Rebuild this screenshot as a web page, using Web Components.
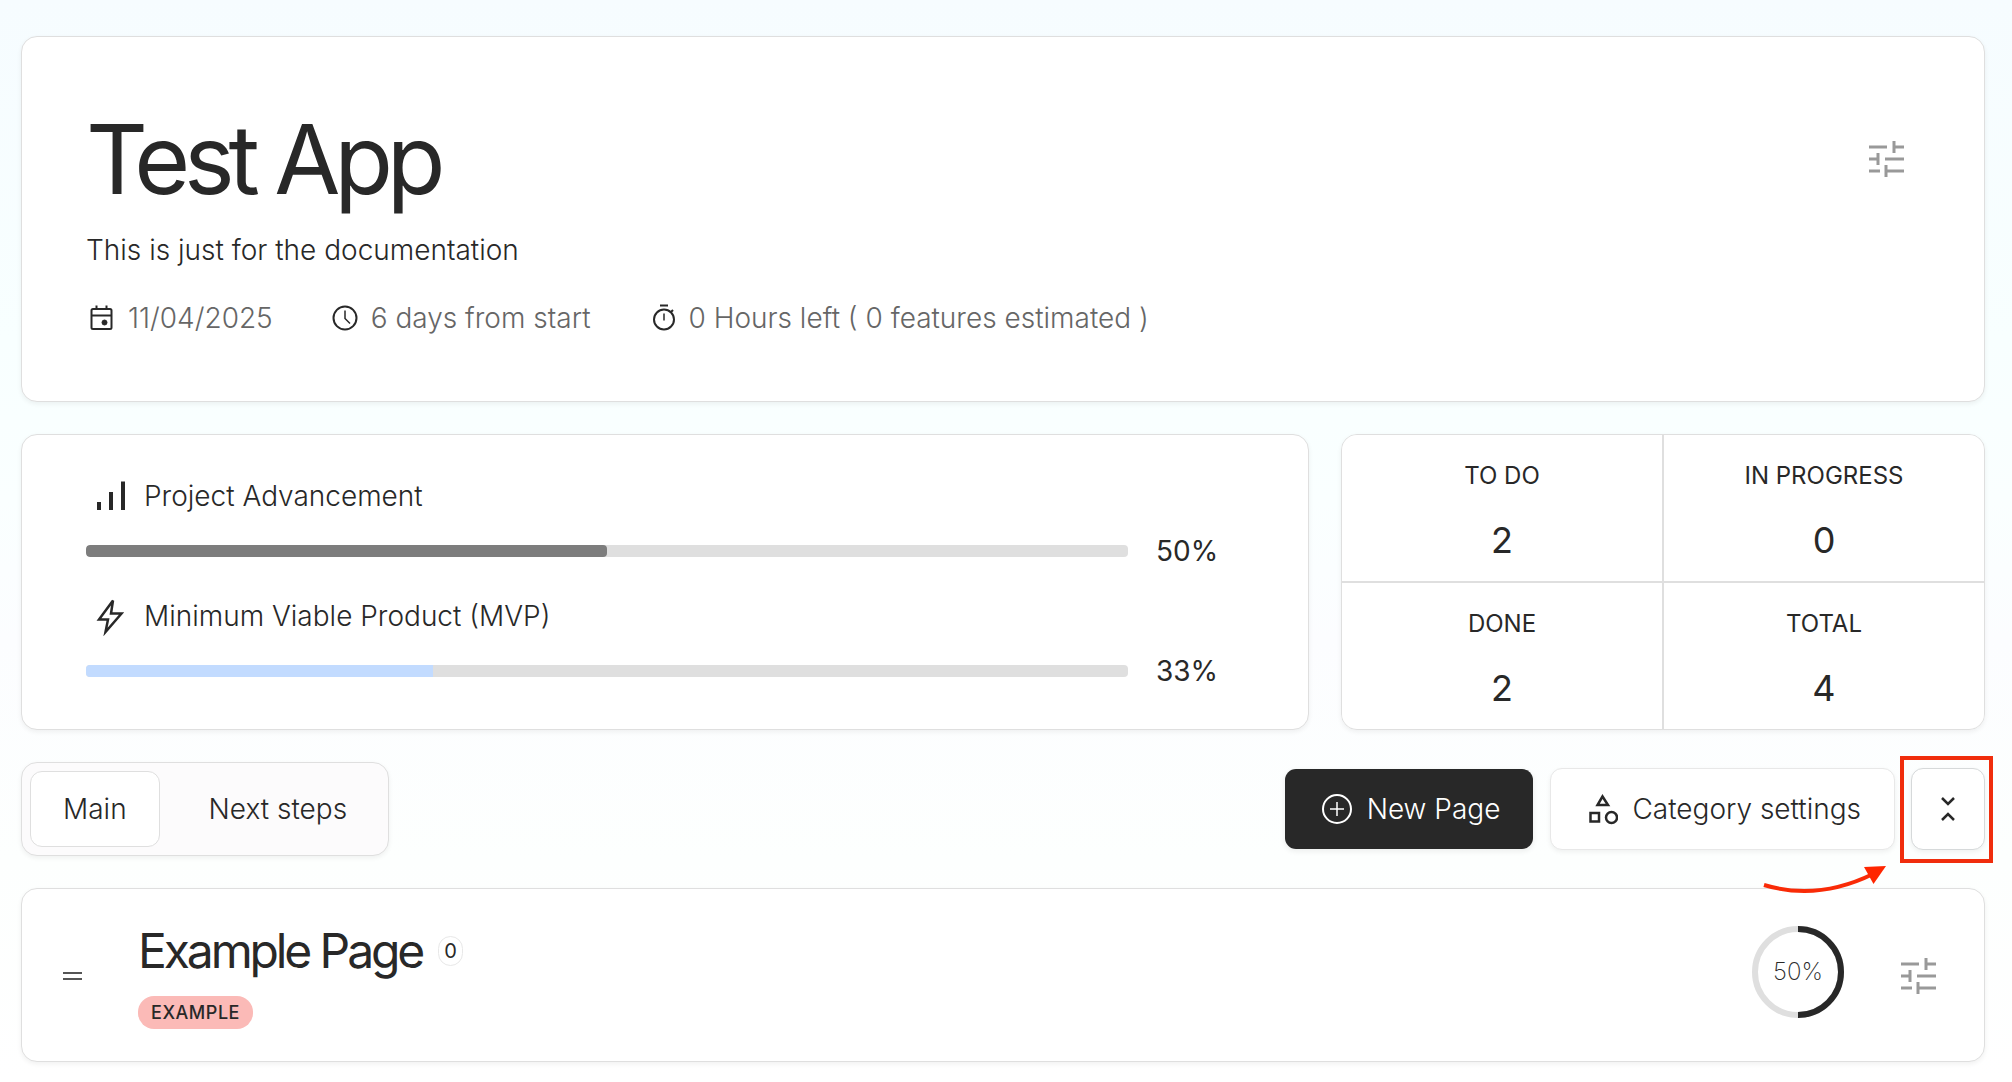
<!DOCTYPE html>
<html lang="en">
<head>
<meta charset="utf-8">
<meta name="viewport" content="width=device-width, initial-scale=1">
<title>Test App</title>
<style>
:root{
	--dark:#282828;
	--muted:#666666;
	--icon:#999999;
	--line:#dfdfdf;
	--track:#dfdfdf;
	--blue:#c2dbff;
	--pink:#fbbab7;
	--shadow:0 2px 5px rgba(0, 0, 0, .06);
	--tight:-0.065em;
}
html{
	min-height:100%;
	background:linear-gradient(180deg, #f6fcff 0, #f8ffff 340px, #faffff 500px, #fcfdff 640px, #fdfffe 860px, #ffffff 1080px);
}
body{
	margin:0;
	font-family:Inter, "Liberation Sans", sans-serif;
	font-size:28px;
	font-weight:300;
	line-height:40px;
	color:var(--dark);
}
</style>
</head>
<body>
<project-page></project-page>
<script>
const icons = {
	tune: `<svg viewBox="0 0 36 36" width="36" height="36" stroke-width="3"><path d="M1 6h18M26 0v12M26 6h10M1 18h9M10 12v12M17 18h19M1 30h11M18 24v12M18 30h18"/></svg>`,
	calendar: `<svg viewBox="0 0 32 32" width="32" height="32" stroke-width="2"><rect x="5.500" y="7" width="20" height="20" rx="1.500"/><path d="M5.500 13.500h20" /><path d="M10.500 3.500V7M20.500 3.500V7"/><circle cx="18.500" cy="20.500" r="2.500" fill="currentColor" stroke-width="1"/></svg>`,
	clock: `<svg viewBox="0 0 32 32" width="32" height="32" stroke-width="2"><circle cx="16" cy="16" r="11.500"/><path d="M16 8.500v8l5 5" stroke-width="1.500"/></svg>`,
	timer: `<svg viewBox="0 0 32 32" width="32" height="32" stroke-width="2"><circle cx="17" cy="17.500" r="10"/><path d="M13 3.500h8M23.500 10.500l2.500-2.500"/><path d="M17 11.500v7" stroke-width="1.500"/></svg>`,
	bars: `<svg viewBox="0 0 32 32" width="32" height="32" stroke-width="4"><path d="M3 22v8M15 12v18M27 1.500v28.500"/></svg>`,
	bolt: `<svg viewBox="0 0 32 40" width="32" height="40" stroke-width="2.500"><path d="M17 4.500L3 23.500h9L9.500 36L25.500 17.500H15z"/></svg>`,
	plus: `<svg viewBox="0 0 32 32" width="32" height="32" stroke-width="2"><circle cx="16" cy="16" r="14"/><path d="M16 9v14M9 16h14" stroke-width="1.500"/></svg>`,
	shapes: `<svg viewBox="-1 0 31 32" width="31" height="32" stroke-width="2.500"><path d="M14.500 3.500L9.500 12h10.500z"/><rect x="2.500" y="20" width="8.500" height="8.500"/><circle cx="23.500" cy="24.500" r="5.500"/></svg>`,
	collapse: `<svg viewBox="0 0 24 28" width="24" height="28" stroke-width="2.500"><path d="M6 3l6 6l6-6M6 25l6-6l6 6"/></svg>`,
	drag: `<svg viewBox="0 0 20 12" width="20" height="12" stroke-width="2"><path d="M1 3h19M1 9h19"/></svg>`
}

class AppIcon extends HTMLElement {
	constructor() {
		super()
		this.attachShadow({mode:'open'})
	}
	connectedCallback() {
		this.shadowRoot.innerHTML = `
		<style>
:host{
	display:flex;
	flex:none;
}
svg{
	display:block;
	fill:none;
	stroke:currentColor;
}
		</style>
		${icons[this.getAttribute('name')]}`
	}
}
customElements.define('app-icon',AppIcon);

class AppCard extends HTMLElement {
	constructor() {
		super()
		this.attachShadow({mode:'open'})
	}
	connectedCallback() {
		this.shadowRoot.innerHTML = `
		<style>
:host{
	display:block;
	box-sizing:border-box;
	background:#fff;
	border:1px solid var(--line);
	border-radius:16px;
	box-shadow:var(--shadow);
}
		</style>
		<slot></slot>`
	}
}
customElements.define('app-card',AppCard);

class TuneButton extends HTMLElement {
	constructor() {
		super()
		this.attachShadow({mode:'open'})
	}
	connectedCallback() {
		this.shadowRoot.innerHTML = `
		<style>
:host{
	display:block;
	flex:none;
}
button{
	display:block;
	padding:16px;
	border:none;
	background:none;
	color:var(--icon);
	cursor:pointer;
}
		</style>
		<button aria-label="${this.getAttribute('label')}"><app-icon name="tune"></app-icon></button>`
	}
}
customElements.define('tune-button',TuneButton);

class MetaItem extends HTMLElement {
	constructor() {
		super()
		this.attachShadow({mode:'open'})
	}
	connectedCallback() {
		this.shadowRoot.innerHTML = `
		<style>
:host{
	display:flex;
	align-items:center;
	gap:10px;
}
span{
	color:var(--muted);
}
		</style>
		<app-icon name="${this.getAttribute('icon')}"></app-icon>
		<span><slot></slot></span>`
	}
}
customElements.define('meta-item',MetaItem);

class ProjectHeader extends HTMLElement {
	constructor() {
		super()
		this.attachShadow({mode:'open'})
	}
	connectedCallback() {
		this.shadowRoot.innerHTML = `
		<style>
:host{
	display:block;
}
header{
	padding:64px 64px 63px;
}
.top{
	display:flex;
	justify-content:space-between;
	align-items:center;
}
h1{
	margin:0;
	font-size:96px;
	font-weight:400;
	line-height:116px;
	letter-spacing:var(--tight);
}
p{
	margin:13px 0 28px;
}
.meta{
	display:flex;
	flex-wrap:wrap;
	gap:56px;
}
		</style>
		<app-card>
			<header>
				<div class="top">
					<h1><slot></slot></h1>
					<tune-button label="Project settings"></tune-button>
				</div>
				<p><slot name="description"></slot></p>
				<div class="meta"><slot name="meta"></slot></div>
			</header>
		</app-card>`
	}
}
customElements.define('project-header',ProjectHeader);

class ProgressLine extends HTMLElement {
	constructor() {
		super()
		this.attachShadow({mode:'open'})
	}
	connectedCallback() {
		const value = this.getAttribute('value')
		this.shadowRoot.innerHTML = `
		<style>
:host{
	display:flex;
	flex-direction:column;
	gap:15px;
}
label{
	display:flex;
	align-items:center;
	gap:16px;
	padding-left:10px;
}
.row{
	display:flex;
	align-items:center;
	gap:28px;
}
progress{
	appearance:none;
	flex:1;
	min-width:0;
	height:12px;
	border:none;
	border-radius:4px;
	overflow:hidden;
	background:var(--track);
}
progress::-webkit-progress-bar{
	background:var(--track);
}
progress::-webkit-progress-value{
	background:var(--fill, #7d7d7d);
	border-radius:var(--end, 4px);
}
output{
	width:88px;
	font-weight:400;
}
		</style>
		<label for="bar"><app-icon name="${this.getAttribute('icon')}"></app-icon><slot></slot></label>
		<div class="row">
			<progress id="bar" max="${this.getAttribute('max')}" value="${value}"></progress>
			<output for="bar">${Math.round(value / this.getAttribute('max') * 100)}%</output>
		</div>`
	}
}
customElements.define('progress-line',ProgressLine);

class StatGrid extends HTMLElement {
	constructor() {
		super()
		this.attachShadow({mode:'open'})
	}
	connectedCallback() {
		this.shadowRoot.innerHTML = `
		<style>
:host{
	display:grid;
	grid-template-columns:1fr 1fr;
	gap:2px;
	height:100%;
	background:var(--line);
	border-radius:15px;
	overflow:hidden;
}
		</style>
		<slot></slot>`
	}
}
customElements.define('stat-grid',StatGrid);

class StatCell extends HTMLElement {
	constructor() {
		super()
		this.attachShadow({mode:'open'})
	}
	connectedCallback() {
		this.shadowRoot.innerHTML = `
		<style>
:host{
	display:flex;
	flex-direction:column;
	align-items:center;
	gap:23px;
	padding:25px 16px 16px;
	background:#fff;
	font-weight:400;
}
span{
	font-size:24px;
	line-height:32px;
	text-transform:uppercase;
}
strong{
	font-size:36px;
	font-weight:400;
	line-height:50px;
}
		</style>
		<span><slot></slot></span>
		<strong>${this.getAttribute('count')}</strong>`
	}
}
customElements.define('stat-cell',StatCell);

class TabBar extends HTMLElement {
	constructor() {
		super()
		this.attachShadow({mode:'open'})
	}
	connectedCallback() {
		const tabs = this.getAttribute('tabs').split(',')
		this.shadowRoot.innerHTML = `
		<style>
:host{
	display:flex;
	gap:16px;
	padding:8px;
	border:1px solid var(--line);
	border-radius:16px;
	background:#fcfbfc;
	box-shadow:var(--shadow);
}
button{
	padding:17px 32px;
	border:1px solid transparent;
	border-radius:12px;
	background:none;
	font:inherit;
	color:inherit;
	cursor:pointer;
}
button[aria-selected="true"]{
	background:#fff;
	border-color:var(--line);
}
		</style>
		${tabs.map((tab, i) => `<button role="tab" aria-selected="${i === 0}">${tab}</button>`).join('')}`
		this.setAttribute('role', 'tablist')
		this.shadowRoot.addEventListener('click', e => {
			const clicked = e.target.closest('button')
			if (!clicked) return
			this.shadowRoot.querySelectorAll('button').forEach(b => b.setAttribute('aria-selected', b === clicked))
		})
	}
}
customElements.define('tab-bar',TabBar);

class ActionButton extends HTMLElement {
	constructor() {
		super()
		this.attachShadow({mode:'open'})
	}
	connectedCallback() {
		const label = this.getAttribute('label')
		this.shadowRoot.innerHTML = `
		<style>
:host{
	display:block;
}
button{
	display:flex;
	align-items:center;
	gap:14px;
	height:82px;
	padding:0 33px 0 36px;
	border:1px solid #e8e8e8;
	border-radius:12px;
	background:#fff;
	box-shadow:var(--shadow);
	font:inherit;
	color:inherit;
	white-space:nowrap;
	cursor:pointer;
}
:host([primary]) button{
	border-color:transparent;
	background:var(--dark);
	background-clip:padding-box;
	color:#fff;
}
:host([square]) button{
	padding:0 24px;
	border-color:#d6d9da;
}
		</style>
		<button ${label ? `aria-label="${label}"` : ''}><app-icon name="${this.getAttribute('icon')}"></app-icon><slot></slot></button>`
	}
}
customElements.define('action-button',ActionButton);

// red frame and arrow laid over whatever is slotted
class CalloutMark extends HTMLElement {
	constructor() {
		super()
		this.attachShadow({mode:'open'})
	}
	connectedCallback() {
		this.shadowRoot.innerHTML = `
		<style>
:host{
	display:block;
	position:relative;
}
.frame{
	position:absolute;
	inset:-12px -8px -13px -11px;
	border:4px solid #f02d0c;
	pointer-events:none;
}
svg{
	position:absolute;
	top:96px;
	right:96px;
	z-index:1;
	pointer-events:none;
}
		</style>
		<slot></slot>
		<div class="frame"></div>
		<svg viewBox="0 0 128 32" width="128" height="32">
			<path d="M3 21Q57 37 112 10" fill="none" stroke="#f92b07" stroke-width="4"/>
			<path d="M103 3L125 2L112.500 20z" fill="#ff2600"/>
		</svg>`
	}
}
customElements.define('callout-mark',CalloutMark);

class ProgressRing extends HTMLElement {
	constructor() {
		super()
		this.attachShadow({mode:'open'})
	}
	connectedCallback() {
		const value = this.getAttribute('value')
		this.shadowRoot.innerHTML = `
		<style>
:host{
	display:grid;
	place-items:center;
	width:92px;
	height:92px;
}
svg, span{
	grid-area:1 / 1;
}
span{
	font-size:24px;
	font-weight:200;
	line-height:32px;
}
circle{
	fill:none;
	stroke-width:6;
	stroke:var(--track);
}
.done{
	stroke:var(--dark);
}
		</style>
		<svg viewBox="0 0 92 92" width="92" height="92">
			<circle cx="46" cy="46" r="43"/>
			<circle class="done" cx="46" cy="46" r="43" pathLength="100" stroke-dasharray="${value} 100" transform="rotate(-90 46 46)"/>
		</svg>
		<span>${value}%</span>`
	}
}
customElements.define('progress-ring',ProgressRing);

class PageRow extends HTMLElement {
	constructor() {
		super()
		this.attachShadow({mode:'open'})
	}
	connectedCallback() {
		this.shadowRoot.innerHTML = `
		<style>
:host{
	display:block;
}
article{
	display:flex;
	align-items:center;
	padding:33px 32px 32px 40px;
}
.drag{
	padding:0;
	border:none;
	background:none;
	color:#555;
	cursor:grab;
}
.info{
	display:flex;
	flex-direction:column;
	align-items:flex-start;
	gap:16px;
	flex:1;
	margin-left:56px;
}
.title{
	display:flex;
	align-items:center;
	gap:16px;
}
h2{
	margin:0;
	font-size:48px;
	font-weight:400;
	line-height:58px;
	letter-spacing:var(--tight);
}
.count{
	padding:0 5px;
	border:1px solid #e8e8e8;
	border-radius:14px;
	font-size:20px;
	font-weight:400;
	line-height:28px;
}
.tag{
	padding:0 13px;
	border-radius:16px;
	background:var(--pink);
	font-size:18px;
	font-weight:500;
	line-height:33px;
	letter-spacing:0.03em;
	text-transform:uppercase;
}
progress-ring{
	margin:0 40px 8px 0;
}
		</style>
		<app-card>
			<article>
				<button class="drag" aria-label="Reorder page"><app-icon name="drag"></app-icon></button>
				<div class="info">
					<div class="title">
						<h2><slot></slot></h2>
						<span class="count">${this.getAttribute('count')}</span>
					</div>
					<span class="tag"><slot name="tag"></slot></span>
				</div>
				<progress-ring value="${this.getAttribute('progress')}"></progress-ring>
				<tune-button label="Page settings"></tune-button>
			</article>
		</app-card>`
	}
}
customElements.define('page-row',PageRow);

class ProjectPage extends HTMLElement {
	constructor() {
		super()
		this.attachShadow({mode:'open'})
	}
	getStyles() {
		return `
		<style>
:host{
	display:block;
}
main{
	display:flex;
	flex-direction:column;
	gap:32px;
	padding:36px 27px 20px 21px;
}
.overview{
	display:grid;
	grid-template-columns:2fr 1fr;
	column-gap:32px;
}
.bars{
	display:flex;
	flex-direction:column;
	gap:25px;
	padding:41px 64px 38px;
}
.mvp{
	--fill:var(--blue);
	--end:0;
}
.toolbar{
	display:flex;
	justify-content:space-between;
	align-items:center;
}
.actions{
	display:flex;
	gap:16px;
}
		</style>`
	}
	connectedCallback() {
		this.shadowRoot.innerHTML = `
		${this.getStyles()}
		<main>
			<project-header>
				Test App
				<span slot="description">This is just for the documentation</span>
				<meta-item slot="meta" icon="calendar">11/04/2025</meta-item>
				<meta-item slot="meta" icon="clock">6 days from start</meta-item>
				<meta-item slot="meta" icon="timer">0 Hours left ( 0 features estimated )</meta-item>
			</project-header>
			<section class="overview">
				<app-card>
					<div class="bars">
						<progress-line icon="bars" value="2" max="4">Project Advancement</progress-line>
						<progress-line class="mvp" icon="bolt" value="1" max="3">Minimum Viable Product (MVP)</progress-line>
					</div>
				</app-card>
				<app-card>
					<stat-grid>
						<stat-cell count="2">To do</stat-cell>
						<stat-cell count="0">In progress</stat-cell>
						<stat-cell count="2">Done</stat-cell>
						<stat-cell count="4">Total</stat-cell>
					</stat-grid>
				</app-card>
			</section>
			<section class="toolbar">
				<tab-bar tabs="Main,Next steps"></tab-bar>
				<div class="actions">
					<action-button primary icon="plus">New Page</action-button>
					<action-button icon="shapes">Category settings</action-button>
					<callout-mark>
						<action-button square icon="collapse" label="Collapse all"></action-button>
					</callout-mark>
				</div>
			</section>
			<page-row count="0" progress="50">Example Page<span slot="tag">Example</span></page-row>
		</main>`
	}
}
customElements.define('project-page',ProjectPage);
</script>
</body>
</html>
